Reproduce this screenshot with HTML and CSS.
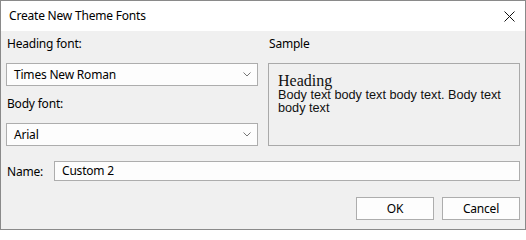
FILE: index.html
```html
<!DOCTYPE html>
<html>
<head>
<meta charset="utf-8">
<link rel="stylesheet" href="styles.css">
</head>
<body>
<div class="window">
  <div class="titlebar">
    <span class="title">Create New Theme Fonts</span>
    <svg class="close" width="11" height="11" viewBox="0 0 11 11"><path d="M0.5 0.5 L10.5 10.5 M10.5 0.5 L0.5 10.5" stroke="#111" stroke-width="1" fill="none"/></svg>
  </div>
  <div class="content">
    <div class="columns">
      <div class="col-left">
        <div class="label">Heading font:</div>
        <div class="select"><span>Times New Roman</span><svg class="chev" width="8" height="5" viewBox="0 0 8 5"><path d="M0.5 0.5 L4 4 L7.5 0.5" stroke="#777" fill="none"/></svg></div>
        <div class="label label-body">Body font:</div>
        <div class="select"><span>Arial</span><svg class="chev" width="8" height="5" viewBox="0 0 8 5"><path d="M0.5 0.5 L4 4 L7.5 0.5" stroke="#777" fill="none"/></svg></div>
      </div>
      <div class="col-right">
        <div class="label">Sample</div>
        <div class="sample">
          <div class="sample-heading">Heading</div>
          <div class="sample-body">Body text body text body text. Body text body text</div>
        </div>
      </div>
    </div>
    <div class="name-row">
      <span class="name-label">Name:</span>
      <div class="input">Custom 2</div>
    </div>
    <div class="buttons">
      <div class="btn">OK</div>
      <div class="btn">Cancel</div>
    </div>
  </div>
</div>
</body>
</html>
```
FILE: styles.css
```css
html, body { margin: 0; padding: 0; }
body {
  font-family: "Noto Sans", "Open Sans", sans-serif;
  font-size: 12px;
  color: #000;
  background: #fff;
}
.window {
  width: 526px;
  height: 230px;
  box-sizing: border-box;
  border: 1px solid #8a8a8a;
  background: #f0f0f0;
  display: flex;
  flex-direction: column;
}
.titlebar {
  height: 30px;
  background: #fff;
  display: flex;
  align-items: center;
  justify-content: space-between;
  padding: 0 10px 0 8px;
  flex: none;
}
.title { font-size: 12px; line-height: 16px; letter-spacing: -0.2px; }
.close { display: block; margin-top: 1px; }
.content {
  padding: 5px 5px 0 5px;
  display: flex;
  flex-direction: column;
}
.columns {
  display: grid;
  grid-template-columns: 252px 252px;
  column-gap: 10px;
}
.col-left, .col-right { display: flex; flex-direction: column; }
.label {
  line-height: 16px;
  height: 16px;
  padding-left: 1px;
  margin-bottom: 11px;
  letter-spacing: -0.2px;
}
.label-body { margin-top: 10px; margin-bottom: 11px; }
.select {
  height: 23px;
  box-sizing: border-box;
  border: 1px solid #adadad;
  background: #fdfdfd;
  display: flex;
  align-items: center;
  justify-content: space-between;
  padding: 0 6px 0 7px;
  letter-spacing: -0.2px;
}
.chev { display: block; }
.sample {
  flex: 1;
  box-sizing: border-box;
  border: 1px solid #a9a9a9;
  padding: 8px 9px;
}
.sample-heading {
  font-family: "Liberation Serif", "Times New Roman", serif;
  font-size: 16px;
  line-height: 17px;
  color: #111;
}
.sample-body {
  font-family: "Liberation Sans", Arial, sans-serif;
  font-size: 12.7px;
  line-height: 13px;
  color: #111;
}
.name-row {
  display: flex;
  align-items: center;
  margin-top: 15px;
  height: 20px;
}
.name-label { width: 47px; padding-left: 1px; letter-spacing: -0.2px; }
.input {
  flex: 1;
  height: 20px;
  box-sizing: border-box;
  border: 1px solid #adadad;
  background: #fdfdfd;
  padding: 0 7px;
  line-height: 18px;
  letter-spacing: -0.2px;
}
.buttons {
  display: flex;
  justify-content: flex-end;
  gap: 8px;
  margin-top: 16px;
}
.btn {
  width: 78px;
  height: 23px;
  box-sizing: border-box;
  border: 1px solid #adadad;
  background: #fdfdfd;
  display: flex;
  align-items: center;
  justify-content: center;
  letter-spacing: -0.2px;
}
```
